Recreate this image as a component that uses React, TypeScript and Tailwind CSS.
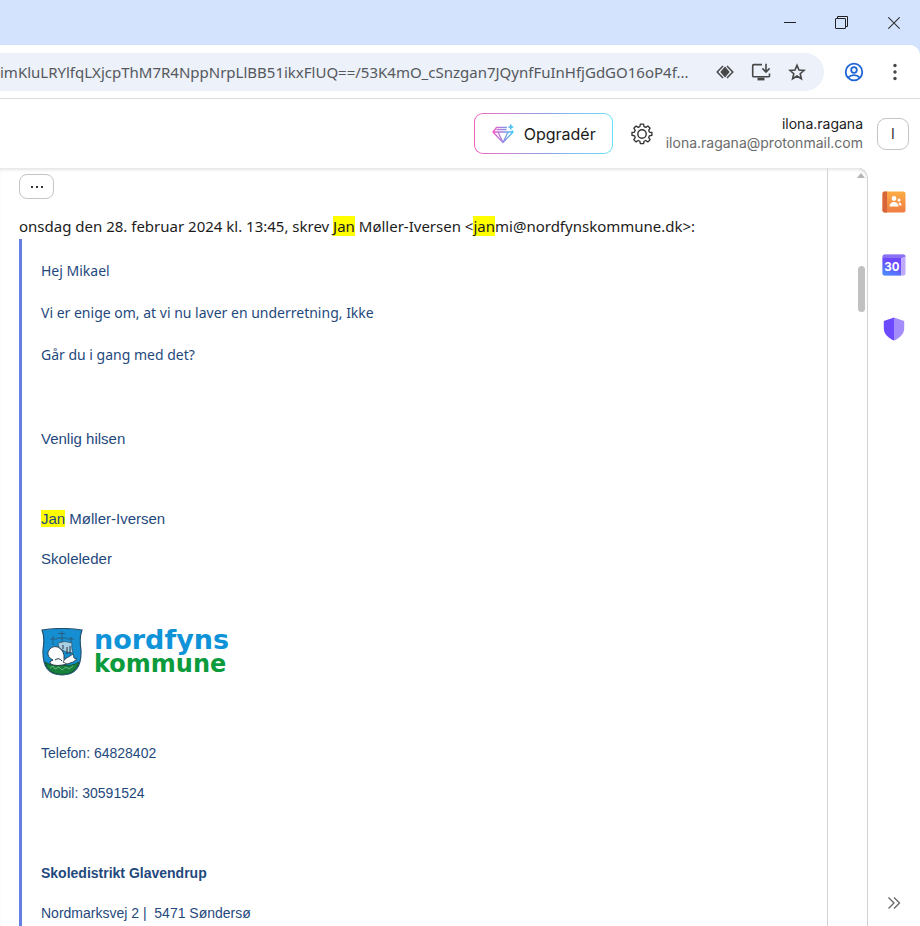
import React from "react";

const noto = "font-['Noto_Sans','Open_Sans',sans-serif]";
const arial = "font-['Liberation_Sans',Arial,sans-serif]";
const inter = "font-['Inter',sans-serif]";

function Mark({ children }: { children: React.ReactNode }) {
  return <mark className="bg-[#ffff00] text-inherit">{children}</mark>;
}

function WindowBar() {
  return (
    <div className="flex h-[45px] shrink-0 items-center justify-end bg-[#d3e3fd]">
      <button aria-label="Minimer" className="flex h-full w-[50px] items-center justify-center">
        <svg width="12" height="12" viewBox="0 0 12 12" stroke="#222" fill="none">
          <path d="M0 5.5h12" />
        </svg>
      </button>
      <button aria-label="Gendan" className="flex h-full w-[53px] items-center justify-center">
        <svg width="13" height="13" viewBox="0 0 13 13" stroke="#222" fill="none">
          <rect x="0.5" y="2.5" width="10" height="10" rx="0.5" />
          <path d="M2.5 2.5v-2h10v10h-2" />
        </svg>
      </button>
      <button aria-label="Luk" className="flex h-full w-[52px] items-center justify-center">
        <svg width="12" height="12" viewBox="0 0 12 12" stroke="#333" strokeWidth="1.1" fill="none">
          <path d="M0.3 0.3l11.4 11.4M11.7 0.3L0.3 11.7" />
        </svg>
      </button>
    </div>
  );
}

function AddressBar() {
  return (
    <div className="shrink-0 bg-[#d3e3fd]">
      <div className="flex h-[54px] items-center rounded-tr-[10px] border-b border-[#dcdcdc] bg-white">
        <div className="flex h-[38px] min-w-0 flex-1 items-center rounded-r-full bg-[#ecf1fa] pr-[17px]">
          <input
            readOnly
            aria-label="Adresse"
            value="imKluLRYlfqLXjcpThM7R4NppNrpLlBB51ikxFlUQ==/53K4mO_cSnzgan7JQynfFuInHfjGdGO16oP4f..."
            className={`h-full min-w-0 flex-1 bg-transparent text-[15px] text-[#55585c] outline-none ${noto}`}
          />
          <div className="flex items-center gap-4">
            <button aria-label="Vis udvidelse" className="flex h-5 w-5 items-center justify-center">
              <svg width="18" height="14" viewBox="0 0 18 14" fill="none" stroke="#474747" strokeWidth="1.5">
                <path d="M7 1L1.200 7L7 13M11 1L16.800 7L11 13" />
                <path d="M9 1.500L13.700 7L9 12.500L4.300 7Z" fill="#474747" stroke="none" />
              </svg>
            </button>
            <button aria-label="Installer app" className="flex h-5 w-5 items-center justify-center">
              <svg width="20" height="18" viewBox="0 0 20 18" fill="none" stroke="#474747" strokeWidth="1.600">
                <path d="M11 1.6H2.8a1.1 1.1 0 0 0-1.1 1.1v10a1.1 1.1 0 0 0 1.1 1.1h14.6a1.1 1.1 0 0 0 1.1-1.1V10.5" />
                <path d="M15 0.8v7.8M11.4 5.4L15 9l3.6-3.6" />
                <path d="M6.5 16h7" strokeWidth="2.8" />
              </svg>
            </button>
            <button aria-label="Bogmærk fanen" className="flex h-5 w-5 items-center justify-center">
              <svg width="18" height="18" viewBox="0 0 18 18" fill="none" stroke="#474747" strokeWidth="1.6">
                <path d="M9 2.3l2 4.7 5.1.4-3.9 3.3 1.2 5L9 13l-4.4 2.7 1.2-5L1.9 7.400l5.1-.4z" />
              </svg>
            </button>
          </div>
        </div>
        <button aria-label="Profil" className="flex h-9 w-[60px] items-center justify-center">
          <svg width="20" height="20" viewBox="0 0 20 20" fill="none" stroke="#1f64d6" strokeWidth="1.8">
            <circle cx="10" cy="10" r="8.300" />
            <circle cx="10" cy="8" r="2.800" />
            <path d="M4.200 15.600c3-3.300 8.600-3.300 11.600 0" />
          </svg>
        </button>
        <button aria-label="Flere" className="mr-[15px] flex h-9 w-[21px] items-center justify-center">
          <svg width="4" height="18" viewBox="0 0 4 18" fill="#474747">
            <circle cx="2" cy="2.500" r="1.700" />
            <circle cx="2" cy="9" r="1.700" />
            <circle cx="2" cy="15.500" r="1.700" />
          </svg>
        </button>
      </div>
    </div>
  );
}

function AppHeader() {
  return (
    <header className={`flex h-[69px] shrink-0 items-center justify-end bg-white pr-[11px] ${inter}`}>
      <div className="rounded-[9px] bg-gradient-to-r from-[#f25fba] via-[#8fa0e0] to-[#66e3f5] p-px">
        <button className="flex h-[39px] w-[137px] items-center rounded-[8px] bg-white pl-[17px] text-[16px] text-[#1b1b1b]">
          <svg className="mr-[10px]" width="22" height="20" viewBox="0 0 22 20" fill="none" stroke="url(#gem)" strokeWidth="1.300" strokeLinejoin="round">
            <defs>
              <linearGradient id="gem" gradientUnits="userSpaceOnUse" x1="0" y1="8" x2="22" y2="8">
                <stop offset="0" stopColor="#ff50c3" />
                <stop offset="0.550" stopColor="#8f8ee6" />
                <stop offset="1" stopColor="#2ed3f7" />
              </linearGradient>
            </defs>
            <path d="M15 3.500H4.500L1 8L11 18.500L21 8L20 6.500M1 8h20M6 8L11 18.500L16 8M4.500 5.700h10" />
            <path d="M18.800 0.500v5M16.300 3h5" strokeWidth="1.600" />
          </svg>
          Opgradér
        </button>
      </div>
      <button aria-label="Indstillinger" className="ml-[17px] flex h-6 w-6 items-center justify-center">
        <svg width="22" height="22" viewBox="0 0 22 22" fill="none" stroke="#333" strokeWidth="1.400" strokeLinejoin="round">
          <path d="M9.300 1h3.400l.5 2.600 1.800.8 2.200-1.500 2.400 2.400-1.500 2.200.7 1.800 2.700.5v2.900l-2.700.6-.7 1.800 1.500 2.200-2.400 2.400-2.200-1.500-1.800.8-.5 2.500H9.300l-.5-2.500-1.800-.8-2.200 1.500-2.400-2.400 1.500-2.200-.7-1.800-2.700-.6V9.800l2.700-.5.7-1.800-1.500-2.200 2.400-2.400L7 4.400l1.800-.8z" transform="translate(0.500 0.200) scale(0.950)" />
          <circle cx="11" cy="11" r="4.200" />
        </svg>
      </button>
      <div className="ml-3 pb-[2px] text-right text-[14px] leading-[19px]">
        <div className="text-[#1b1b1b]">ilona.ragana</div>
        <div className="text-[#6b6b6b]">ilona.ragana@protonmail.com</div>
      </div>
      <button className="ml-[14px] h-8 w-8 rounded-[9px] border border-[#c4c4c4] text-[14px] text-[#333]">I</button>
    </header>
  );
}

function Crest() {
  return (
    <svg width="42" height="48" viewBox="0 0 42 48">
      <path d="M1 2Q21 -1 41 2Q38 9 40 22Q41 47 21 47Q1 47 2 22Q4 9 1 2Z" fill="#168fd2" stroke="#23506f" strokeWidth="1.200" />
      <path d="M4 34Q12 39 21 37Q30 39 38 34Q35 46.300 21 46.300Q7 46.300 4 34Z" fill="#17803a" stroke="#14502b" strokeWidth="0.800" />
      <path d="M12 8v9M21 3v13M30 9v8M9 11h7M17 5.500h7M26 11h7M16 10h10" stroke="#2b5876" strokeWidth="0.900" />
      <path d="M17 15Q24 12 31 15Q30 19 32 25L25 24L18 20Z" fill="#a9cfe4" stroke="#2b4d63" strokeWidth="0.700" />
      <path d="M7 24Q10 17 17 19Q24 23 23 31Q23 34 26 36Q15 39 10 36Q7 34 12 32Q6 29 7 24Z" fill="#fbfdfe" stroke="#24343f" strokeWidth="0.900" />
      <path d="M24 31L29 28L32 26L33 30L36 31L32 34L26 36L22 34Z" fill="#fff" stroke="#24343f" strokeWidth="0.800" />
      <path d="M14 32Q18 29 21 33M26 19v7M29 18v8M22 17v4" fill="none" stroke="#24343f" strokeWidth="1" />
      <path d="M9 40l3-2 2 3 4-2 3 3 4-3 3 2 4-3" fill="none" stroke="#7fc492" strokeWidth="0.800" />
    </svg>
  );
}

function Logo() {
  return (
    <div className="flex h-[154px] items-center pb-2">
      <Crest />
      <div className="ml-[11px] font-['DejaVu_Sans',sans-serif] font-bold">
        <div className="text-[27px] leading-6 text-[#0f93d8]">nordfyns</div>
        <div className="text-[24px] leading-6 text-[#0b9a3c]">kommune</div>
      </div>
    </div>
  );
}

function Message() {
  return (
    <main className="min-w-0 flex-1 overflow-hidden border-r border-[#d4d4d4] pl-[19px]">
      <button aria-label="Vis mere" className="mt-[6px] flex h-[25px] w-[35px] items-center justify-center gap-[3px] rounded-[8px] border border-[#c4c4c4]">
        <span className="h-[2px] w-[2px] bg-[#333]" />
        <span className="h-[2px] w-[2px] bg-[#333]" />
        <span className="h-[2px] w-[2px] bg-[#333]" />
      </button>
      <p className={`mt-4 whitespace-nowrap pb-[2px] text-[15px] leading-[22px] text-[#1c1c1c] ${noto}`}>
        onsdag den 28. februar 2024 kl. 13:45, skrev <Mark>Jan</Mark> Møller-Iversen &lt;<Mark>jan</Mark>mi@nordfynskommune.dk&gt;:
      </p>
      <blockquote className="border-l-[3px] border-[#657ee4] pl-[19px] pt-[11px] text-[#1f497d]">
        <div className={`pb-px text-[14px] leading-[42px] ${noto}`}>
          <p>Hej Mikael</p>
          <p>Vi er enige om, at vi nu laver en underretning, Ikke</p>
          <p>Går du i gang med det?</p>
          <p>&nbsp;</p>
        </div>
        <div className={`text-[15px] leading-[40px] ${arial}`}>
          <p>Venlig hilsen</p>
          <p>&nbsp;</p>
          <p><Mark>Jan</Mark> Møller-Iversen</p>
          <p>Skoleleder</p>
        </div>
        <Logo />
        <div className={`text-[14px] leading-[40px] ${arial}`}>
          <p>Telefon: 64828402</p>
          <p>Mobil: 30591524</p>
          <p>&nbsp;</p>
          <p className="font-bold">Skoledistrikt Glavendrup</p>
          <p>Nordmarksvej 2 |&nbsp; 5471 Søndersø</p>
        </div>
      </blockquote>
    </main>
  );
}

function ScrollTrack() {
  return (
    <div className="flex w-[39px] shrink-0 flex-col items-end pr-[2px] pt-[5px]">
      <svg width="8" height="5" viewBox="0 0 8 5" fill="#b5b5b5">
        <path d="M0 5L4 0L8 5Z" />
      </svg>
      <div className="mt-[88px] h-[46px] w-[7px] rounded-full bg-[#c1c1c1]" />
    </div>
  );
}

function SideRail() {
  return (
    <aside className="flex w-[52px] shrink-0 flex-col items-center pb-[14px] pt-[23px]">
      <button aria-label="Kontakter">
        <svg width="24" height="22" viewBox="0 0 24 22">
          <defs>
            <linearGradient id="con" x1="0" y1="0" x2="0" y2="1">
              <stop offset="0" stopColor="#fdae45" />
              <stop offset="1" stopColor="#ee7b44" />
            </linearGradient>
          </defs>
          <rect x="0.500" y="0.500" width="23" height="21" rx="2" fill="url(#con)" />
          <path d="M2.500 0.500H5v21H2.500a2 2 0 0 1-2-2v-17a2 2 0 0 1 2-2z" fill="#d8643b" />
          <circle cx="12" cy="7.500" r="2.400" fill="#fff" />
          <path d="M7.500 15.500c0-3 2-4.500 4.500-4.500s4.500 1.500 4.500 4.500z" fill="#fff" />
          <circle cx="17" cy="9" r="1.500" fill="#fff" />
          <path d="M17.500 14.500h2c0-2-1-3.200-3-3z" fill="#fff" />
        </svg>
      </button>
      <button aria-label="Kalender" className="mt-[41px]">
        <svg width="24" height="22" viewBox="0 0 24 22">
          <defs>
            <linearGradient id="cal" x1="0.700" y1="0" x2="0.200" y2="1">
              <stop offset="0.300" stopColor="#6d4aff" />
              <stop offset="1" stopColor="#4a8dfb" />
            </linearGradient>
          </defs>
          <rect x="0.500" y="0.500" width="23" height="21" rx="2" fill="#bfa9fb" />
          <path d="M2.500 0.500H21.500a2 2 0 0 1 2 2L19 4H0.500V2.500a2 2 0 0 1 2-2z" fill="#8a70f5" />
          <path d="M0.500 4H19v17.500H2.500a2 2 0 0 1-2-2z" fill="url(#cal)" />
          <text x="9.800" y="16.800" fontSize="11.500" fontWeight="700" textAnchor="middle" fill="#fff" fontFamily="Inter, sans-serif">30</text>
        </svg>
      </button>
      <button aria-label="Sikkerhed" className="mt-[41px]">
        <svg width="22" height="24" viewBox="0 0 22 24">
          <path d="M11 0.500L0.800 4v7.500c0 5.500 5 10 10.200 12z" fill="#6d4aff" />
          <path d="M11 0.500L21.200 4v7.500c0 5.500-5 10-10.200 12z" fill="#a58cfb" />
        </svg>
      </button>
      <button aria-label="Skjul panel" className="mt-auto">
        <svg width="14" height="18" viewBox="0 0 14 18" fill="none" stroke="#666" strokeWidth="1.300">
          <path d="M1.500 3.500L7 9l-5.500 5.500M7 3.500L12.500 9L7 14.500" />
        </svg>
      </button>
    </aside>
  );
}

export default function App() {
  return (
    <div className="flex h-screen flex-col overflow-hidden bg-white">
      <WindowBar />
      <AddressBar />
      <AppHeader />
      <div className="flex min-h-0 flex-1 overflow-hidden">
        <div className="-mt-px flex min-w-0 flex-1 rounded-tr-[12px] border-r border-t border-[#d4d4d4] shadow-[inset_0_3px_3px_-1px_#e6e6e6]">
          <Message />
          <ScrollTrack />
        </div>
        <SideRail />
      </div>
    </div>
  );
}
